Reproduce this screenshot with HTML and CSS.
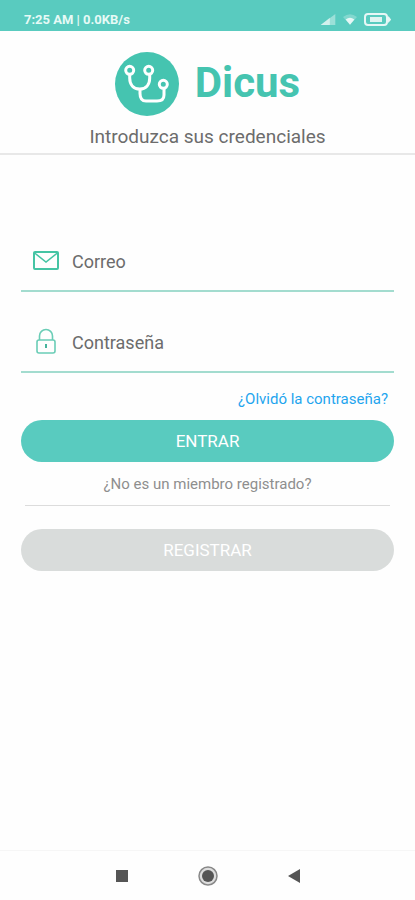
FILE: index.html
```html
<!DOCTYPE html>
<html lang="es">
  <head>
    <meta charset="UTF-8" />
    <meta name="viewport" content="width=device-width, initial-scale=1.0" />
    <title>Dicus</title>
    <link rel="stylesheet" href="styles.css">
  </head>
  <body>
    <div class="status-bar">
      <span>7:25 AM | 0.0KB/s</span>
      <div class="status-icons">
        <svg width="16" height="11" viewBox="0 0 16 12">
          <path d="M0 12 16 0v12z" fill="#fff" opacity="0.4" />
          <path d="M0 12 10 4v8z" fill="#fff" opacity="0.55" />
        </svg>
        <svg width="14" height="11" viewBox="0 0 16 12">
          <path d="M0 3Q8-3 16 3L8 12z" fill="#fff" opacity="0.25" />
          <path d="M3 6Q8 2 13 6L8 12z" fill="#fff" opacity="0.8" />
        </svg>
        <svg width="27" height="13" viewBox="0 0 27 13">
          <rect x="1" y="1" width="22" height="11" rx="3" fill="none" stroke="#fff" stroke-width="2" opacity="0.85" />
          <rect x="6" y="4" width="12" height="5" fill="#fff" opacity="0.8" />
          <path d="M24 3q3 3 3 3.500t-3 3.500z" fill="#fff" opacity="0.85" />
        </svg>
      </div>
    </div>

    <header class="header">
      <div class="brand">
        <svg class="logo" width="64" height="64" viewBox="0 0 64 64">
          <circle cx="32" cy="32" r="32" fill="#45c4b0" />
          <g fill="none" stroke="#fff" stroke-width="3" stroke-linecap="round">
            <circle cx="14.700" cy="18.300" r="4" />
            <circle cx="33.700" cy="18.300" r="4" />
            <circle cx="48.300" cy="32.300" r="4" />
            <path d="M14.700 23v3c0 7 4 11 10 11s10-4 10-11v-3" />
            <path d="M25 37.500v4c0 5 2 7.500 6 7.500h11c5 0 7-2 7-6v-6" />
          </g>
        </svg>
        <h1>Dicus</h1>
      </div>
      <p>Introduzca sus credenciales</p>
    </header>

    <main>
      <form class="login">
        <div class="field">
          <svg width="28" height="28" viewBox="0 0 28 28" fill="none" stroke="#45c4a4" stroke-width="2">
            <rect x="2" y="5" width="24" height="17" rx="1" />
            <path d="M2 5.500 14 15 26 5.500" stroke-width="1.500" />
          </svg>
          <input type="email" id="correo" placeholder="Correo" aria-label="Correo" />
        </div>
        <div class="field">
          <svg width="28" height="28" viewBox="0 0 28 28" fill="none" stroke="#6acdb6" stroke-width="1.600">
            <rect x="5" y="12" width="18" height="13" rx="2" />
            <path d="M7.500 12V8a6.500 6.500 0 0 1 13 0v4" />
            <path d="M14 16v4" stroke-width="2" stroke="#45b49c" />
          </svg>
          <input type="password" id="contrasena" placeholder="Contraseña" aria-label="Contraseña" />
        </div>
        <a class="forgot" href="#">¿Olvidó la contraseña?</a>
        <button type="submit" class="btn">ENTRAR</button>
        <p class="member">¿No es un miembro registrado?</p>
        <button type="button" class="btn btn-grey">REGISTRAR</button>
      </form>
    </main>

    <nav class="nav-bar">
      <button type="button" aria-label="Recientes">
        <svg width="20" height="20" viewBox="0 0 20 20">
          <rect x="4" y="4" width="12" height="12" fill="#555" />
        </svg>
      </button>
      <button type="button" aria-label="Inicio">
        <svg width="20" height="20" viewBox="0 0 20 20">
          <circle cx="10" cy="10" r="9" fill="#ddd" stroke="#888" stroke-width="1.500" />
          <circle cx="10" cy="10" r="6" fill="#555" />
        </svg>
      </button>
      <button type="button" aria-label="Atrás">
        <svg width="20" height="20" viewBox="0 0 20 20">
          <path d="M4 10 16 3v14z" fill="#555" />
        </svg>
      </button>
    </nav>
  </body>
</html>
```
FILE: styles.css
```css
* {
  box-sizing: border-box;
}

body {
  font-family: Roboto, "Liberation Sans", sans-serif;
  background-color: #fefefe;
  margin: 0;
  min-height: 100vh;
  display: flex;
  flex-direction: column;
}

.status-bar {
  display: flex;
  justify-content: space-between;
  align-items: center;
  height: 31px;
  padding: 8px 24px 0;
  background-color: #59cbbf;
  color: #e6faf6;
  font-size: 13px;
  font-weight: bold;
}

.status-icons {
  display: flex;
  align-items: center;
  gap: 7px;
}

.header {
  padding: 21px 16px 4px;
  border-bottom: 2px solid #e8e8e8;
  text-align: center;
}

.brand {
  display: flex;
  justify-content: center;
  align-items: center;
  gap: 16px;
}

.brand h1 {
  margin: 0;
  padding-bottom: 2px;
  color: #45c4b0;
  font-size: 42px;
  line-height: 48px;
}

.header p {
  margin: 9px 0 0;
  color: #6c6c6c;
  font-size: 19px;
  line-height: 24px;
}

main {
  flex: 1;
  padding: 56px 21px 24px;
}

.login {
  display: flex;
  flex-direction: column;
}

.field {
  display: flex;
  align-items: flex-end;
  gap: 8px;
  height: 81px;
  padding: 0 11px 15px;
  border-bottom: 2px solid #a3dccf;
}

.field input {
  flex: 1;
  min-width: 0;
  height: 28px;
  padding: 0 4px;
  border: none;
  outline: none;
  background: none;
  color: #6c6c6c;
  font-family: inherit;
  font-size: 18px;
}

.field input::placeholder {
  color: #6c6c6c;
  opacity: 1;
}

.forgot {
  align-self: flex-end;
  margin: 16px 6px 11px 0;
  color: #1ea5ee;
  font-size: 15px;
  line-height: 20px;
  text-decoration: none;
}

.btn {
  height: 42px;
  border: none;
  border-radius: 21px;
  background-color: #59cbbf;
  color: #fff;
  font-family: inherit;
  font-size: 17px;
  cursor: pointer;
}

.member {
  margin: 0 4px 23px;
  padding: 12px 0 11px;
  border-bottom: 1px solid #dcdcdc;
  color: #8e8e8e;
  font-size: 15px;
  line-height: 20px;
  text-align: center;
}

.btn-grey {
  background-color: #d9dcdb;
}

.nav-bar {
  display: flex;
  justify-content: center;
  gap: 66px;
  padding: 15px 0 14px;
  border-top: 1px solid #f6f6f6;
}

.nav-bar button {
  display: flex;
  padding: 0;
  border: none;
  background: none;
}
```
